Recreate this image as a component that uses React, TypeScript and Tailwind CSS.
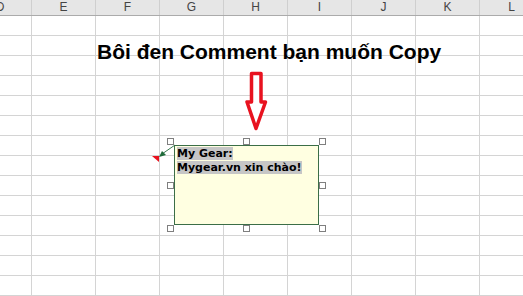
const columns = [
  { name: "D", width: "w-[32px]" },
  { name: "E", width: "w-[64px]" },
  { name: "F", width: "w-[64px]" },
  { name: "G", width: "w-[64px]" },
  { name: "H", width: "w-[64px]" },
  { name: "I", width: "w-[64px]" },
  { name: "J", width: "w-[64px]" },
  { name: "K", width: "w-[64px]" },
  { name: "L", width: "w-[64px]" },
];

const rows = Array.from({ length: 14 }, (_, i) => i);

const handles = [
  "left-[167px] top-[138px]",
  "left-[243px] top-[138px]",
  "left-[319px] top-[138px]",
  "left-[167px] top-[182px]",
  "left-[319px] top-[182px]",
  "left-[167px] top-[225px]",
  "left-[243px] top-[225px]",
  "left-[319px] top-[225px]",
];

function Sheet() {
  return (
    <div className="flex flex-col">
      <div className="flex h-[16px] bg-[#e6e6e6] border-b border-[#ababab]">
        {columns.map((c) => (
          <div
            key={c.name}
            className={`${c.width} shrink-0 overflow-hidden border-r border-[#cfcfcf] text-center text-[12px] leading-[15px] text-[#444]`}
          >
            {c.name === "D" ? <div className="w-[64px] ml-[-32px] text-center">D</div> : c.name}
          </div>
        ))}
      </div>
      {rows.map((r) => (
        <div key={r} className="flex h-[20px] border-b border-[#d4d4d4]">
          {columns.map((c) => (
            <div key={c.name} className={`${c.width} shrink-0 border-r border-[#d4d4d4]`} />
          ))}
        </div>
      ))}
    </div>
  );
}

export default function App() {
  return (
    <div className="relative w-[523px] h-[296px] overflow-hidden bg-white font-['Liberation_Sans',Arial,sans-serif]">
      <Sheet />

      <h1 className="absolute left-[97px] top-[40px] text-[21px] leading-[24px] font-bold text-black whitespace-nowrap">
        Bôi đen Comment bạn muốn Copy
      </h1>

      <svg className="absolute inset-0 pointer-events-none" width="523" height="296" viewBox="0 0 523 296">
        <polygon
          points="251.5,73.5 261,73.5 261,102 265.5,102 256,128.5 247,102 251.5,102"
          fill="#ffffff"
          stroke="#e8121f"
          strokeWidth="3.5"
          strokeLinejoin="round"
        />
        <polygon points="152,156 159,156 159,162" fill="#e8121f" />
        <line x1="162" y1="154" x2="175" y2="145" stroke="#3b7a52" strokeWidth="1" />
        <polygon points="159,157 166,155 162,151" fill="#1f6b3a" />
      </svg>

      <div className="absolute left-[174px] top-[145px] w-[145px] h-[80px] border border-[#3b6e47] bg-[#ffffe1] pl-[2px] pt-[1px] font-['DejaVu_Sans',Tahoma,sans-serif] text-[11px] leading-[14px] font-bold text-black">
        <div>
          <span className="bg-[#c6c6c6]">My Gear:</span>
        </div>
        <div>
          <span className="bg-[#c6c6c6]">Mygear.vn xin chào!</span>
        </div>
      </div>

      {handles.map((h) => (
        <div key={h} className={`absolute ${h} w-[7px] h-[7px] border border-[#7f7f7f] bg-white`} />
      ))}
    </div>
  );
}
